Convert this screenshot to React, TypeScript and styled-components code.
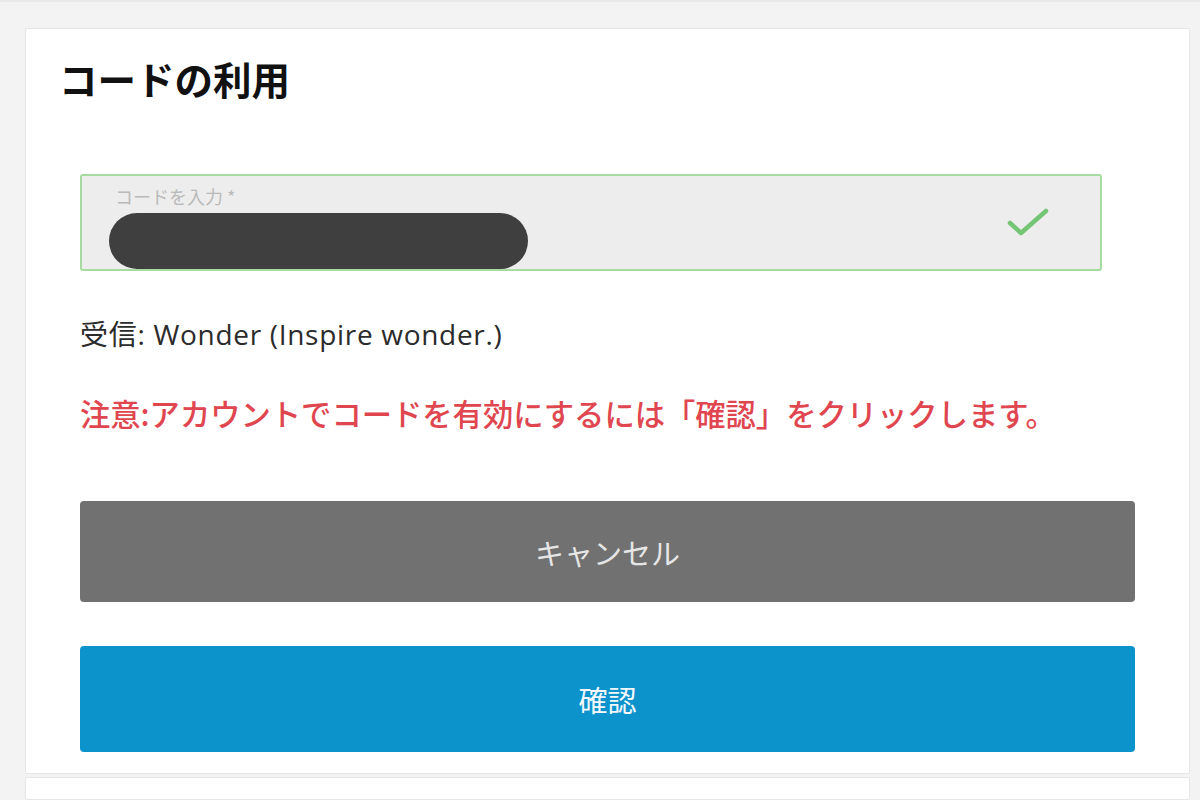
import React from "react";
import styled, { createGlobalStyle } from "styled-components";

const GlobalStyle = createGlobalStyle`
	html, body {
		margin: 0;
		padding: 0;
		background: #f3f3f3;
		font-family: "Noto Sans", "Noto Sans CJK JP", sans-serif;
	}
	* {
		box-sizing: border-box;
	}
`;

const Page = styled.div`
	display: flex;
	flex-direction: column;
	gap: 3px;
	width: 1200px;
	height: 800px;
	overflow: hidden;
	padding: 26px 10px 0 25px;
	border-top: 2px solid #e9e9e9;
`;

const Card = styled.section`
	background: #ffffff;
	border: 1px solid #e6e6e6;
	border-radius: 2px;
	display: flex;
	flex-direction: column;
`;

const Title = styled.h1`
	margin: 25px 0 0 33px;
	font-family: "Noto Sans CJK JP", sans-serif;
	font-size: 38.5px;
	line-height: 48px;
	font-weight: 700;
	color: #111111;
`;

const Body = styled.div`
	display: flex;
	flex-direction: column;
	padding: 0 54px 21px 54px;
`;

const Field = styled.div`
	display: flex;
	align-items: center;
	justify-content: space-between;
	height: 97px;
	margin: 72px 33px 0 0;
	padding: 0 50px 0 27px;
	background: #ededed;
	border: 2px solid #a6dca2;
	border-radius: 3px;
	overflow: hidden;
`;

const FieldValue = styled.div`
	display: flex;
	flex-direction: column;
	align-self: stretch;
	padding-top: 10px;
`;

const FieldLabel = styled.label`
	padding-left: 6px;
	font-family: "Noto Sans CJK JP", sans-serif;
	font-size: 18px;
	line-height: 20px;
	color: #bababa;
`;

const Redacted = styled.span`
	display: block;
	width: 419px;
	height: 58px;
	margin-top: 7px;
	border-radius: 29px;
	background: #3f3f3f;
`;

const Check = styled.svg`
	width: 44px;
	height: 34px;
	margin-top: -2px;
`;

const Received = styled.p`
	margin: 46px 0 0 0;
	font-family: "Open Sans", "Noto Sans CJK JP", sans-serif;
	font-size: 28px;
	line-height: 34px;
	letter-spacing: 0.7px;
	color: #2b2b2b;
`;

const Notice = styled.p`
	margin: 44px 0 0 0;
	font-family: "Noto Sans CJK JP", sans-serif;
	font-size: 30.3px;
	line-height: 36px;
	font-weight: 500;
	color: #e0464f;
`;

const Button = styled.button<{ $tone: "gray" | "blue"; $height: number }>`
	width: 100%;
	height: ${(p) => p.$height}px;
	border: none;
	border-radius: 4px;
	background: ${(p) => (p.$tone === "blue" ? "#0c93cc" : "#717171")};
	color: ${(p) => (p.$tone === "blue" ? "#f2f8fc" : "#e6e6e6")};
	font-family: "Noto Sans CJK JP", sans-serif;
	font-size: 29px;
	cursor: pointer;
`;

const CancelButton = styled(Button)`
	margin-top: 70px;
`;

const ConfirmButton = styled(Button)`
	margin-top: 44px;
`;

const NextCard = styled(Card)`
	flex: 1;
`;

function App() {
	return (
		<>
			<GlobalStyle />
			<Page>
				<Card>
					<Title>コードの利用</Title>
					<Body>
						<Field>
							<FieldValue>
								<FieldLabel>コードを入力 *</FieldLabel>
								<Redacted />
							</FieldValue>
							<Check viewBox="0 0 44 34">
								<polyline
									points="4,18 15,28 40,6"
									fill="none"
									stroke="#74c576"
									strokeWidth="4.5"
									strokeLinecap="round"
									strokeLinejoin="round"
								/>
							</Check>
						</Field>
						<Received>受信: Wonder (Inspire wonder.)</Received>
						<Notice>注意:アカウントでコードを有効にするには「確認」をクリックします。</Notice>
						<CancelButton $tone="gray" $height={101}>
							キャンセル
						</CancelButton>
						<ConfirmButton $tone="blue" $height={106}>
							確認
						</ConfirmButton>
					</Body>
				</Card>
				<NextCard />
			</Page>
		</>
	);
}

export default App;
